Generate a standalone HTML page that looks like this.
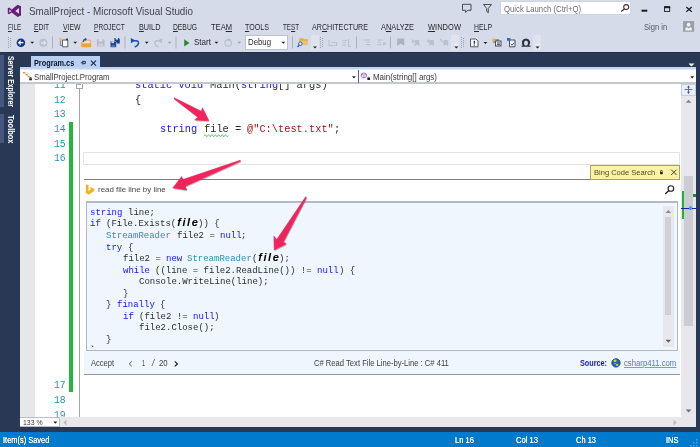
<!DOCTYPE html>
<html><head><meta charset="utf-8"><title>SmallProject - Microsoft Visual Studio</title>
<style>
html,body{margin:0;padding:0;background:#293955;overflow:hidden;}
#root{position:relative;width:700px;height:447px;overflow:hidden;background:#293955;font-family:"Liberation Sans",sans-serif;}
#root div{position:absolute;box-sizing:border-box;}
.t{position:absolute;white-space:pre;line-height:1;transform-origin:0 50%;display:inline-block;}
.t u{text-decoration:underline;text-underline-offset:1px;text-decoration-thickness:0.7px;}
svg#ov{position:absolute;left:0;top:0;}
.t{filter:blur(0.3px);}
svg#ov{filter:blur(0.25px);}

</style></head><body>
<div id="root">
<!-- chrome: title + menu + toolbar -->
<div style="left:0;top:0;width:700px;height:52px;background:#d6dbe9;"></div>
<!-- quick launch -->
<div style="left:500px;top:1px;width:131px;height:14px;background:#ffffff;border:1px solid #d0d5e2;"></div>
<!-- debug combo -->
<div style="left:245px;top:35px;width:43px;height:14.500px;background:#ffffff;border:1px solid #b9c2d6;"></div>
<!-- toolbar overflow buttons -->
<div style="left:311px;top:35px;width:8px;height:15px;background:#dfe3ee;"></div>
<div style="left:451px;top:35px;width:8px;height:15px;background:#dfe3ee;"></div>
<div style="left:533px;top:35px;width:8px;height:15px;background:#dfe3ee;"></div>

<!-- dark frame -->
<div style="left:0;top:52px;width:700px;height:379px;background:#293955;"></div>
<div style="left:0;top:52px;width:700px;height:1px;background:#222f4b;"></div>
<!-- left autohide tabs -->
<div style="left:0;top:55px;width:4px;height:52px;background:#44587d;"></div>
<div style="left:0;top:114px;width:4px;height:29px;background:#44587d;"></div>

<!-- doc tab -->
<div style="left:30.5px;top:55.5px;width:69.5px;height:13px;background:#b8d0f2;"></div>
<div style="left:20px;top:67px;width:676px;height:2px;background:#c0d5f2;"></div><div style="left:20px;top:69px;width:676px;height:1px;background:#dfe9f8;"></div>
<!-- nav bar -->
<div style="left:20px;top:70px;width:676px;height:14px;background:#ffffff;border-bottom:2px solid #c2c7d3;"></div>
<div style="left:357.500px;top:70px;width:1.500px;height:13px;background:#5d6883;"></div>

<!-- editor -->
<div style="left:20px;top:84px;width:676px;height:333px;background:#ffffff;"></div>
<div style="left:20px;top:84px;width:15px;height:333px;background:#e6e7e8;"></div>
<div style="left:79px;top:88px;width:1px;height:329px;background:#a5a5a5;"></div>
<!-- green change bar -->
<div style="left:69px;top:122px;width:4px;height:270px;background:#22b83f;"></div>
<!-- collapse box -->
<div style="left:75.500px;top:84px;width:7.500px;height:5px;background:#ffffff;border:1px solid #a5a5a5;border-top:none;"></div>
<!-- current line box -->
<div style="left:83px;top:152px;width:597px;height:13px;background:#ffffff;border:1px solid #e4e4e4;"></div>
<!-- panel top line -->
<div style="left:84px;top:179px;width:507px;height:1px;background:#7e7e7e;"></div>
<!-- bing code search tab -->
<div style="left:590px;top:165px;width:90px;height:15px;background:#fbf3a3;border:1px solid #a8a26a;"></div>
<!-- code box -->
<div style="left:86px;top:201px;width:592px;height:150px;background:#eff6fe;border:1px solid #b2b8c0;border-top:2px solid #b4bac3;"></div>
<!-- code box scrollbar -->
<div style="left:663px;top:206px;width:11px;height:141px;background:#e8e8ec;"></div>
<div style="left:665px;top:217px;width:6px;height:98px;background:#cfd0d5;"></div>
<!-- accept row -->
<div style="left:84px;top:351px;width:596px;height:24px;background:#f0f6fe;border-bottom:1px solid #979797;"></div>

<!-- vertical scrollbar -->
<div style="left:681px;top:84px;width:15px;height:333px;background:#e8e8ec;"></div>
<div style="left:681px;top:84px;width:15px;height:12px;background:#e9eef8;border:1px solid #c5cde0;"></div>
<div style="left:683.5px;top:176px;width:9.5px;height:150px;background:#cccdd3;"></div>
<div style="left:682px;top:190.5px;width:2px;height:28.5px;background:#1fb53c;"></div>
<div style="left:693px;top:193.5px;width:3.3px;height:3.4px;background:#1e8a2e;"></div>
<div style="left:681px;top:207.5px;width:15.5px;height:1px;background:#1b1fa0;"></div>
<div style="left:688.9px;top:206.3px;width:3.4px;height:3.4px;background:#3a96ff;border-radius:2px;"></div>

<!-- bottom: zoom + hscroll -->
<div style="left:20px;top:417px;width:676px;height:10px;background:#e8e8ec;"></div>
<div style="left:20px;top:417px;width:39.500px;height:10px;background:#ffffff;border:1px solid #b9bdc8;border-left:none;"></div>


<!-- status bar -->
<div style="left:0;top:432px;width:700px;height:15px;background:#007acc;"></div>

<span class=t id=t0 style='left:29.00px;top:7.10px;font-size:10.2px;color:#44444a;font-family:"Liberation Sans", sans-serif;transform:scaleX(0.9666);'>SmallProject - Microsoft Visual Studio</span>
<span class=t id=t1 style='left:8.00px;top:22.80px;font-size:8.5px;color:#2a2a2e;font-family:"Liberation Sans", sans-serif;transform:scaleX(0.7235);'><u>F</u>ILE</span>
<span class=t id=t2 style='left:34.30px;top:22.80px;font-size:8.5px;color:#2a2a2e;font-family:"Liberation Sans", sans-serif;transform:scaleX(0.7794);'><u>E</u>DIT</span>
<span class=t id=t3 style='left:63.00px;top:22.80px;font-size:8.5px;color:#2a2a2e;font-family:"Liberation Sans", sans-serif;transform:scaleX(0.8098);'><u>V</u>IEW</span>
<span class=t id=t4 style='left:94.30px;top:22.80px;font-size:8.5px;color:#2a2a2e;font-family:"Liberation Sans", sans-serif;transform:scaleX(0.7738);'><u>P</u>ROJECT</span>
<span class=t id=t5 style='left:138.60px;top:22.80px;font-size:8.5px;color:#2a2a2e;font-family:"Liberation Sans", sans-serif;transform:scaleX(0.8544);'><u>B</u>UILD</span>
<span class=t id=t6 style='left:173.00px;top:22.80px;font-size:8.5px;color:#2a2a2e;font-family:"Liberation Sans", sans-serif;transform:scaleX(0.7938);'><u>D</u>EBUG</span>
<span class=t id=t7 style='left:211.00px;top:22.80px;font-size:8.5px;color:#2a2a2e;font-family:"Liberation Sans", sans-serif;transform:scaleX(0.8889);'>TEA<u>M</u></span>
<span class=t id=t8 style='left:245.00px;top:22.80px;font-size:8.5px;color:#2a2a2e;font-family:"Liberation Sans", sans-serif;transform:scaleX(0.8371);'><u>T</u>OOLS</span>
<span class=t id=t9 style='left:283.00px;top:22.80px;font-size:8.5px;color:#2a2a2e;font-family:"Liberation Sans", sans-serif;transform:scaleX(0.7356);'>TE<u>S</u>T</span>
<span class=t id=t10 style='left:312.00px;top:22.80px;font-size:8.5px;color:#2a2a2e;font-family:"Liberation Sans", sans-serif;transform:scaleX(0.8409);'>AR<u>C</u>HITECTURE</span>
<span class=t id=t11 style='left:381.00px;top:22.80px;font-size:8.5px;color:#2a2a2e;font-family:"Liberation Sans", sans-serif;transform:scaleX(0.8659);'>A<u>N</u>ALYZE</span>
<span class=t id=t12 style='left:428.00px;top:22.80px;font-size:8.5px;color:#2a2a2e;font-family:"Liberation Sans", sans-serif;transform:scaleX(0.8844);'><u>W</u>INDOW</span>
<span class=t id=t13 style='left:474.00px;top:22.80px;font-size:8.5px;color:#2a2a2e;font-family:"Liberation Sans", sans-serif;transform:scaleX(0.8101);'><u>H</u>ELP</span>
<span class=t id=t14 style='left:644.20px;top:22.90px;font-size:8.6px;color:#555b68;font-family:"Liberation Sans", sans-serif;transform:scaleX(0.8828);'>Sign in</span>
<span class=t id=t15 style='left:503.80px;top:5.00px;font-size:8.4px;color:#6d6d78;font-family:"Liberation Sans", sans-serif;transform:scaleX(0.9240);'>Quick Launch (Ctrl+Q)</span>
<span class=t id=t16 style='left:194.00px;top:38.30px;font-size:8.4px;color:#2a2a2e;font-family:"Liberation Sans", sans-serif;transform:scaleX(0.9611);'>Start</span>
<span class=t id=t17 style='left:248.00px;top:38.30px;font-size:8.4px;color:#2a2a2e;font-family:"Liberation Sans", sans-serif;transform:scaleX(0.9316);'>Debug</span>
<span class=t id=t18 style='left:33.90px;top:58.50px;font-size:8.6px;color:#0a1428;font-family:"Liberation Sans", sans-serif;font-weight:bold;transform:scaleX(0.8500);'>Program.cs</span>
<span class=t id=t19 style='left:34.40px;top:72.50px;font-size:8.7px;color:#3a3a3e;font-family:"Liberation Sans", sans-serif;transform:scaleX(0.8947);'>SmallProject.Program</span>
<span class=t id=t20 style='left:372.50px;top:72.50px;font-size:8.7px;color:#3a3a3e;font-family:"Liberation Sans", sans-serif;transform:scaleX(0.9141);'>Main(string[] args)</span>
<span class=t id=t21 style='left:7.50px;top:4.08px;font-size:9.2px;color:#ffffff;font-family:"Liberation Sans", sans-serif;font-weight:bold;transform:rotate(90deg) scaleX(0.744);transform-origin:0 0;left:15.4px;top:55.6px;'>Server Explorer</span>
<span class=t id=t22 style='left:7.50px;top:92.51px;font-size:9.2px;color:#ffffff;font-family:"Liberation Sans", sans-serif;font-weight:bold;transform:rotate(90deg) scaleX(0.813);transform-origin:0 0;left:15.4px;top:114.5px;'>Toolbox</span>
<span class=t id=t41 style='left:98.30px;top:186.40px;font-size:8.0px;color:#484848;font-family:"Liberation Sans", sans-serif;transform:scaleX(0.9885);'>read file line by line</span>
<span class=t id=t42 style='left:90.20px;top:208.90px;font-size:8.9px;color:#1414f0;font-family:"Liberation Mono", monospace;transform:scaleX(1.0135);'>string</span>
<span class=t id=t43 style='left:128.00px;top:208.90px;font-size:8.9px;color:#2c2c2c;font-family:"Liberation Mono", monospace;transform:scaleX(1.0135);'>line;</span>
<span class=t id=t44 style='left:90.20px;top:220.44px;font-size:8.9px;color:#1414f0;font-family:"Liberation Mono", monospace;transform:scaleX(1.0135);'>if</span>
<span class=t id=t45 style='left:106.40px;top:220.44px;font-size:8.9px;color:#2c2c2c;font-family:"Liberation Mono", monospace;transform:scaleX(1.0137);'>(File.Exists(</span>
<span class=t id=t46 style='left:177.20px;top:217.44px;font-size:11px;color:#000000;font-family:"Liberation Sans", sans-serif;font-weight:bold;font-style:italic;letter-spacing:1.6px;'>file</span>
<span class=t id=t47 style='left:198.20px;top:220.44px;font-size:8.9px;color:#2c2c2c;font-family:"Liberation Mono", monospace;transform:scaleX(1.0135);'>)) {</span>
<span class=t id=t48 style='left:106.40px;top:231.98px;font-size:8.9px;color:#2b91af;font-family:"Liberation Mono", monospace;transform:scaleX(1.0137);'>StreamReader</span>
<span class=t id=t49 style='left:176.60px;top:231.98px;font-size:8.9px;color:#2c2c2c;font-family:"Liberation Mono", monospace;transform:scaleX(1.0139);'>file2 =</span>
<span class=t id=t50 style='left:219.80px;top:231.98px;font-size:8.9px;color:#1414f0;font-family:"Liberation Mono", monospace;transform:scaleX(1.0135);'>null</span>
<span class=t id=t51 style='left:241.40px;top:231.98px;font-size:8.9px;color:#2c2c2c;font-family:"Liberation Mono", monospace;transform:scaleX(1.0135);'>;</span>
<span class=t id=t52 style='left:106.40px;top:243.52px;font-size:8.9px;color:#1414f0;font-family:"Liberation Mono", monospace;transform:scaleX(1.0135);'>try</span>
<span class=t id=t53 style='left:128.00px;top:243.52px;font-size:8.9px;color:#2c2c2c;font-family:"Liberation Mono", monospace;transform:scaleX(1.0135);'>{</span>
<span class=t id=t54 style='left:122.60px;top:255.06px;font-size:8.9px;color:#2c2c2c;font-family:"Liberation Mono", monospace;transform:scaleX(1.0139);'>file2 =</span>
<span class=t id=t55 style='left:165.80px;top:255.06px;font-size:8.9px;color:#1414f0;font-family:"Liberation Mono", monospace;transform:scaleX(1.0135);'>new</span>
<span class=t id=t56 style='left:187.40px;top:255.06px;font-size:8.9px;color:#2b91af;font-family:"Liberation Mono", monospace;transform:scaleX(1.0137);'>StreamReader</span>
<span class=t id=t57 style='left:252.20px;top:255.06px;font-size:8.9px;color:#2c2c2c;font-family:"Liberation Mono", monospace;transform:scaleX(1.0135);'>(</span>
<span class=t id=t58 style='left:258.20px;top:252.06px;font-size:11px;color:#000000;font-family:"Liberation Sans", sans-serif;font-weight:bold;font-style:italic;letter-spacing:1.6px;'>file</span>
<span class=t id=t59 style='left:279.20px;top:255.06px;font-size:8.9px;color:#2c2c2c;font-family:"Liberation Mono", monospace;transform:scaleX(1.0135);'>);</span>
<span class=t id=t60 style='left:122.60px;top:266.60px;font-size:8.9px;color:#1414f0;font-family:"Liberation Mono", monospace;transform:scaleX(1.0135);'>while</span>
<span class=t id=t61 style='left:155.00px;top:266.60px;font-size:8.9px;color:#2c2c2c;font-family:"Liberation Mono", monospace;transform:scaleX(1.0139);'>((line = file2.ReadLine()) !=</span>
<span class=t id=t62 style='left:317.00px;top:266.60px;font-size:8.9px;color:#1414f0;font-family:"Liberation Mono", monospace;transform:scaleX(1.0135);'>null</span>
<span class=t id=t63 style='left:338.60px;top:266.60px;font-size:8.9px;color:#2c2c2c;font-family:"Liberation Mono", monospace;transform:scaleX(1.0135);'>) {</span>
<span class=t id=t64 style='left:138.80px;top:278.14px;font-size:8.9px;color:#2c2c2c;font-family:"Liberation Mono", monospace;transform:scaleX(1.0139);'>Console.WriteLine(line);</span>
<span class=t id=t65 style='left:122.60px;top:289.68px;font-size:8.9px;color:#2c2c2c;font-family:"Liberation Mono", monospace;transform:scaleX(1.0135);'>}</span>
<span class=t id=t66 style='left:106.40px;top:301.22px;font-size:8.9px;color:#2c2c2c;font-family:"Liberation Mono", monospace;transform:scaleX(1.0135);'>}</span>
<span class=t id=t67 style='left:117.20px;top:301.22px;font-size:8.9px;color:#1414f0;font-family:"Liberation Mono", monospace;transform:scaleX(1.0139);'>finally</span>
<span class=t id=t68 style='left:160.40px;top:301.22px;font-size:8.9px;color:#2c2c2c;font-family:"Liberation Mono", monospace;transform:scaleX(1.0135);'>{</span>
<span class=t id=t69 style='left:122.60px;top:312.76px;font-size:8.9px;color:#1414f0;font-family:"Liberation Mono", monospace;transform:scaleX(1.0135);'>if</span>
<span class=t id=t70 style='left:138.80px;top:312.76px;font-size:8.9px;color:#2c2c2c;font-family:"Liberation Mono", monospace;transform:scaleX(1.0138);'>(file2 !=</span>
<span class=t id=t71 style='left:192.80px;top:312.76px;font-size:8.9px;color:#1414f0;font-family:"Liberation Mono", monospace;transform:scaleX(1.0135);'>null</span>
<span class=t id=t72 style='left:214.40px;top:312.76px;font-size:8.9px;color:#2c2c2c;font-family:"Liberation Mono", monospace;transform:scaleX(1.0135);'>)</span>
<span class=t id=t73 style='left:138.80px;top:324.30px;font-size:8.9px;color:#2c2c2c;font-family:"Liberation Mono", monospace;transform:scaleX(1.0139);'>file2.Close();</span>
<span class=t id=t74 style='left:106.40px;top:335.84px;font-size:8.9px;color:#2c2c2c;font-family:"Liberation Mono", monospace;transform:scaleX(1.0135);'>}</span>
<span class=t id=t75 style='left:90.60px;top:358.90px;font-size:8.4px;color:#3c3c3c;font-family:"Liberation Sans", sans-serif;transform:scaleX(0.9020);'>Accept</span>
<span class=t id=t76 style='left:142.30px;top:358.90px;font-size:8.4px;color:#3c3c3c;font-family:"Liberation Sans", sans-serif;transform:scaleX(0.6421);'>1</span>
<span class=t id=t77 style='left:152.00px;top:358.90px;font-size:8.4px;color:#3c3c3c;font-family:"Liberation Sans", sans-serif;font-style:italic;transform:scaleX(0.9879);'>/</span>
<span class=t id=t78 style='left:159.30px;top:358.90px;font-size:8.4px;color:#3c3c3c;font-family:"Liberation Sans", sans-serif;transform:scaleX(0.9327);'>20</span>
<span class=t id=t79 style='left:313.70px;top:358.90px;font-size:8.3px;color:#3c3c3c;font-family:"Liberation Sans", sans-serif;transform:scaleX(0.9182);'>C# Read Text File Line-by-Line : C# 411</span>
<span class=t id=t80 style='left:580.00px;top:358.90px;font-size:8.3px;color:#1818b0;font-family:"Liberation Sans", sans-serif;font-weight:bold;transform:scaleX(0.8741);'>Source:</span>
<span class=t id=t81 style='left:623.70px;top:359.10px;font-size:8.3px;color:#4f7cc8;font-family:"Liberation Sans", sans-serif;transform:scaleX(0.9321);text-decoration:underline;text-decoration-thickness:0.5px;text-underline-offset:0.8px;text-decoration-color:#7a9ad6;'>csharp411.com</span>
<span class=t id=t82 style='left:594.00px;top:169.40px;font-size:8.0px;color:#4e4a24;font-family:"Liberation Sans", sans-serif;transform:scaleX(0.9409);'>Bing Code Search</span>
<span class=t id=t83 style='left:22.90px;top:419.10px;font-size:7.0px;color:#3a3a3a;font-family:"Liberation Sans", sans-serif;transform:scaleX(0.9869);'>133 %</span>
<span class=t id=t84 style='left:2.70px;top:435.90px;font-size:8.4px;color:#ffffff;font-family:"Liberation Sans", sans-serif;transform:scaleX(0.8899);text-shadow:0 0 0.5px #fff;'>Item(s) Saved</span>
<span class=t id=t85 style='left:455.00px;top:435.90px;font-size:8.4px;color:#ffffff;font-family:"Liberation Sans", sans-serif;transform:scaleX(0.9061);text-shadow:0 0 0.5px #fff;'>Ln 16</span>
<span class=t id=t86 style='left:516.00px;top:435.90px;font-size:8.4px;color:#ffffff;font-family:"Liberation Sans", sans-serif;transform:scaleX(0.9084);text-shadow:0 0 0.5px #fff;'>Col 13</span>
<span class=t id=t87 style='left:576.00px;top:435.90px;font-size:8.4px;color:#ffffff;font-family:"Liberation Sans", sans-serif;transform:scaleX(0.8945);text-shadow:0 0 0.5px #fff;'>Ch 13</span>
<span class=t id=t88 style='left:665.50px;top:435.90px;font-size:8.4px;color:#ffffff;font-family:"Liberation Sans", sans-serif;transform:scaleX(0.8949);text-shadow:0 0 0.5px #fff;'>INS</span>
<div style='left:0;top:84px;width:700px;height:333px;overflow:hidden;'>
<span class=t id=t23 style='left:54.30px;top:-4.00px;font-size:10.6px;color:#2b91af;font-family:"Liberation Mono", monospace;transform:scaleX(0.9199);'>11</span>
<span class=t id=t24 style='left:54.30px;top:10.60px;font-size:10.6px;color:#2b91af;font-family:"Liberation Mono", monospace;transform:scaleX(0.9199);'>12</span>
<span class=t id=t25 style='left:54.30px;top:25.40px;font-size:10.6px;color:#2b91af;font-family:"Liberation Mono", monospace;transform:scaleX(0.9199);'>13</span>
<span class=t id=t26 style='left:54.30px;top:40.00px;font-size:10.6px;color:#2b91af;font-family:"Liberation Mono", monospace;transform:scaleX(0.9199);'>14</span>
<span class=t id=t27 style='left:54.30px;top:54.70px;font-size:10.6px;color:#2b91af;font-family:"Liberation Mono", monospace;transform:scaleX(0.9199);'>15</span>
<span class=t id=t28 style='left:54.30px;top:69.40px;font-size:10.6px;color:#2b91af;font-family:"Liberation Mono", monospace;transform:scaleX(0.9199);'>16</span>
<span class=t id=t29 style='left:54.30px;top:296.40px;font-size:10.6px;color:#2b91af;font-family:"Liberation Mono", monospace;transform:scaleX(0.9199);'>17</span>
<span class=t id=t30 style='left:54.30px;top:311.30px;font-size:10.6px;color:#2b91af;font-family:"Liberation Mono", monospace;transform:scaleX(0.9199);'>18</span>
<span class=t id=t31 style='left:54.30px;top:326.20px;font-size:10.6px;color:#2b91af;font-family:"Liberation Mono", monospace;transform:scaleX(0.9199);'>19</span>
<span class=t id=t32 style='left:135.30px;top:-4.00px;font-size:10.6px;color:#1414f0;font-family:"Liberation Mono", monospace;transform:scaleX(0.9752);'>static void</span>
<span class=t id=t33 style='left:209.70px;top:-4.00px;font-size:10.6px;color:#2c2c2c;font-family:"Liberation Mono", monospace;transform:scaleX(0.9749);'>Main(</span>
<span class=t id=t34 style='left:240.70px;top:-4.00px;font-size:10.6px;color:#1414f0;font-family:"Liberation Mono", monospace;transform:scaleX(0.9749);'>string</span>
<span class=t id=t35 style='left:277.90px;top:-4.00px;font-size:10.6px;color:#2c2c2c;font-family:"Liberation Mono", monospace;transform:scaleX(0.9752);'>[] args)</span>
<span class=t id=t36 style='left:135.30px;top:10.60px;font-size:10.6px;color:#2c2c2c;font-family:"Liberation Mono", monospace;transform:scaleX(0.9749);'>{</span>
<span class=t id=t37 style='left:160.10px;top:39.80px;font-size:10.6px;color:#1414f0;font-family:"Liberation Mono", monospace;transform:scaleX(0.9749);'>string</span>
<span class=t id=t38 style='left:203.50px;top:39.80px;font-size:10.6px;color:#2c2c2c;font-family:"Liberation Mono", monospace;transform:scaleX(0.9749);'>file =</span>
<span class=t id=t39 style='left:246.90px;top:39.80px;font-size:10.6px;color:#a31515;font-family:"Liberation Mono", monospace;transform:scaleX(0.9751);'>@&quot;C:\test.txt&quot;</span>
<span class=t id=t40 style='left:333.70px;top:39.80px;font-size:10.6px;color:#2c2c2c;font-family:"Liberation Mono", monospace;transform:scaleX(0.9749);'>;</span>
</div>
<svg id="ov" width="700" height="447" viewBox="0 0 700 447">
<defs>
<filter id="sh" x="-20%" y="-20%" width="140%" height="140%"><feGaussianBlur stdDeviation="0.5"/></filter>
</defs>
<!-- VS logo -->
<path fill="#68217a" fill-rule="evenodd" d="M17.600 4.700 L21 6.200 V15.600 L17.600 17.100 L11.600 12.400 L9.200 14.300 L7.800 13.600 V8.200 L9.200 7.500 L11.600 9.400 Z M19 8.100 L15.300 10.900 L19 13.700 Z M9.300 9.400 V12.600 L11.400 11 Z"/>
<!-- feedback bubble -->
<path fill="none" stroke="#3c3c40" stroke-width="0.900" d="M462.500 4.300 H471 V10.300 H467.800 L465.600 12.400 V10.300 H462.500 Z"/>
<!-- funnel / flag -->
<path fill="none" stroke="#3c3c40" stroke-width="0.900" d="M483.500 4.500 H491.500 L488.300 8.500 V12.800 L486.700 11.500 V8.500 Z"/>
<!-- quick launch magnifier -->
<circle cx="626.200" cy="7.100" r="2.500" fill="none" stroke="#3a3a3a" stroke-width="1.100"/>
<path stroke="#3a3a3a" stroke-width="1.300" d="M624.400 8.900 L621.200 11.500"/>
<!-- window buttons -->
<rect x="641.500" y="9.700" width="5.800" height="2" fill="#1e1e1e"/>
<rect x="664.500" y="6.800" width="5.200" height="4.600" fill="none" stroke="#1e1e1e" stroke-width="0.900"/>
<rect x="664" y="6.300" width="6.200" height="1.900" fill="#1e1e1e"/>
<path stroke="#1e1e1e" stroke-width="1.200" d="M686.300 7 L691.700 11.800 M691.700 7 L686.300 11.800"/>
<!-- sign-in avatar -->
<rect x="683.100" y="21.100" width="11" height="10.700" fill="#9a9ea9"/>
<circle cx="688.600" cy="24.700" r="1.900" fill="#f2f3f7"/>
<path fill="#f2f3f7" d="M685.400 30.600 V28.300 Q685.600 27.200 687 27.200 L688.600 28.600 L690.200 27.200 Q691.600 27.200 691.800 28.300 V30.600 Z"/>

<!-- TOOLBAR -->
<g id="tb">
<!-- gripper -->
<g fill="#9aa3b8"><rect x="8" y="37" width="1" height="1"/><rect x="10" y="38" width="1" height="1"/><rect x="8" y="39" width="1" height="1"/><rect x="10" y="40" width="1" height="1"/><rect x="8" y="41" width="1" height="1"/><rect x="10" y="42" width="1" height="1"/><rect x="8" y="43" width="1" height="1"/><rect x="10" y="44" width="1" height="1"/><rect x="8" y="45" width="1" height="1"/><rect x="10" y="46" width="1" height="1"/><rect x="8" y="47" width="1" height="1"/></g>
<!-- back -->
<circle cx="20.900" cy="42.700" r="4.300" fill="#15397f"/>
<path fill="none" stroke="#ffffff" stroke-width="1.200" d="M23.400 42.700 H18.800 M20.700 40.700 L18.700 42.700 L20.700 44.700"/>
<path fill="#1e1e1e" d="M30.300 41.700 h3.800 l-1.900 2.100 z"/>
<!-- forward grey -->
<circle cx="43.300" cy="42.800" r="4.100" fill="#bcc0cc"/>
<path fill="none" stroke="#e4e7ef" stroke-width="1.200" d="M41 42.800 H45.400 M43.600 40.900 L45.500 42.800 L43.600 44.700"/>
<rect x="52" y="36.500" width="1" height="12" fill="#a9b1c4"/>
<!-- new item -->
<path fill="none" stroke="#6a7080" stroke-width="0.800" d="M60.400 41 V45.500 H62"/>
<path fill="#fbfbfd" stroke="#4a4f5c" stroke-width="0.900" d="M62.500 40 H67.800 V46.800 H62.500 Z"/>
<path fill="#ebb868" d="M59.200 38.200 h2.800 v2.600 h-2.800z"/>
<path fill="#2a2e3a" d="M66.200 38.500 h1.700 v1.700 h-1.700z"/>
<path fill="#1e1e1e" d="M73.300 41.700 h3.800 l-1.900 2.100 z"/>
<!-- open folder -->
<path fill="#f6e0b0" stroke="#e2a441" stroke-width="0.800" d="M86.500 40.200 H90.600 V46.600 H81.800 V42 Z"/>
<path fill="#e8a33d" d="M81.400 43.400 H90.900 V47.100 H81.400 Z"/>
<path fill="none" stroke="#1c57b0" stroke-width="1.200" d="M83.300 42 Q83.300 39.400 85.600 39.200"/>
<path fill="#1c57b0" d="M85 37.700 L87 39.300 L85 40.900 Z"/>
<!-- save grey -->
<path fill="#b7bcc9" d="M97 39.200 H103.300 L104.600 40.500 V46.600 H97 Z"/>
<rect x="98.700" y="39.200" width="3.600" height="2.300" fill="#dcdfe8"/>
<rect x="98.600" y="43.400" width="4.400" height="3.200" fill="#cdd1dc"/>
<!-- save all navy -->
<path fill="#1c3f8c" d="M114.400 38 H118.600 L119.800 39.200 V43.400 H114.400 Z"/>
<rect x="115.700" y="38" width="2.200" height="1.700" fill="#d8e0f0"/>
<path fill="#1c3f8c" stroke="#d4d9e8" stroke-width="0.600" d="M110.200 41.300 H115.200 L116.400 42.500 V47.200 H110.200 Z"/>
<rect x="111.500" y="41.500" width="2.400" height="1.700" fill="#d8e0f0"/>
<rect x="111.500" y="44.800" width="3.400" height="2.400" fill="#5670b0"/>
<rect x="124.500" y="36.500" width="1" height="12" fill="#a9b1c4"/>
<!-- undo -->
<path fill="none" stroke="#1c4fa8" stroke-width="1.500" d="M133 40.700 H136 Q138.800 41 138.500 43.500 Q138 45.800 134.800 47"/>
<path fill="#1c4fa8" d="M130.800 38 L131 43.200 L135.300 40.400 Z"/>
<path fill="#1e1e1e" d="M144.800 41.700 h3.800 l-1.900 2.100 z"/>
<!-- redo grey -->
<path fill="none" stroke="#bcc0cc" stroke-width="1.400" d="M160 40.700 H157.300 Q154.600 41 154.900 43.500 Q155.400 45.800 158.400 47"/>
<path fill="#bcc0cc" d="M162.200 38 L162 43.200 L157.800 40.400 Z"/>
<path fill="#9ba1b0" d="M167.700 41.700 h3.800 l-1.900 2.100 z"/>
<rect x="175.500" y="36.500" width="1" height="12" fill="#a9b1c4"/>
<!-- start -->
<path fill="#2e8a2e" d="M184.200 39.200 L189.500 42.900 L184.200 46.600 Z"/>
<path fill="#1e1e1e" d="M214.500 41.700 h3.800 l-1.900 2.100 z"/>
<!-- refresh grey -->
<circle cx="228.100" cy="43.100" r="3.200" fill="none" stroke="#b9bdc9" stroke-width="1.100"/>
<path fill="#b9bdc9" d="M227.500 38.300 L231 39.600 L228.300 41.600 Z"/>
<path fill="#9ba1b0" d="M237.400 41.700 h3.800 l-1.900 2.100 z"/>
<path fill="#1e1e1e" d="M281.400 41.700 h3.800 l-1.900 2.100 z"/>
<rect x="292" y="36.500" width="1" height="12" fill="#a9b1c4"/>
<!-- find in files -->
<path fill="#e8a93f" d="M299.500 38.300 H303 L304 39.300 H307.900 V44.400 H299.500 Z"/>
<path fill="#f0c170" d="M300.500 40.800 H307.900 V44.400 H299.500 Z"/>
<circle cx="300.300" cy="43.800" r="1.800" fill="#e4ecfa" stroke="#1c57b0" stroke-width="0.900"/>
<path stroke="#1c57b0" stroke-width="1.200" d="M299.100 45.200 L297.600 47"/>
<!-- overflow -->
<rect x="313" y="44" width="4" height="1" fill="#f4f5f9"/><path fill="#1e1e1e" d="M313 46.500 h4 l-2 2 z"/>
<!-- gripper 2 -->
<g fill="#9aa3b8"><rect x="320" y="37" width="1" height="1"/><rect x="322" y="38" width="1" height="1"/><rect x="320" y="39" width="1" height="1"/><rect x="322" y="40" width="1" height="1"/><rect x="320" y="41" width="1" height="1"/><rect x="322" y="42" width="1" height="1"/><rect x="320" y="43" width="1" height="1"/><rect x="322" y="44" width="1" height="1"/><rect x="320" y="45" width="1" height="1"/><rect x="322" y="46" width="1" height="1"/><rect x="320" y="47" width="1" height="1"/></g>
<!-- greyed icons -->
<g fill="none" stroke="#bdc2d0" stroke-width="1.100">
<path d="M329 40 V45.500 H336.500 V42.500 H331"/>
<path d="M342.500 40.500 H347 M342.500 42.700 H346 M342.500 45 H346 M348.500 39 V46.500 H351"/>
<path d="M363.500 40 H370 M366 42.300 H370 M366 44.600 H370"/>
<path d="M377.500 40 H383 M377.500 42.300 H381 M377.500 44.600 H381 M383 42.500 L385.300 44.800 M385.300 42.500 L383 44.800"/>
</g>
<rect x="356" y="36.500" width="1" height="12" fill="#a9b1c4"/>
<rect x="390" y="36.500" width="1" height="12" fill="#a9b1c4"/>
<path fill="#acb1c0" d="M397.200 38.400 H404.200 V45.800 L400.700 43.600 L397.200 45.800 Z"/>
<g fill="#bbc0ce">
<path d="M414.800 40 H419.300 V46.200 L417 44.600 L414.800 46.200 Z"/><path d="M412 39 l3 2.200 l-3 2.200 z"/>
<path d="M429.400 40 H433.900 V46.200 L431.600 44.600 L429.400 46.200 Z"/><path d="M429.400 39 l-3 2.200 l3 2.200 z"/>
<path d="M443.600 40 H448.100 V46.200 L445.800 44.600 L443.600 46.200 Z"/><path d="M440.400 38.600 l3.600 3.600 l-0.900 0.900 l-3.600 -3.600 z"/>
</g>
<rect x="454.300" y="44" width="4" height="1" fill="#f4f5f9"/><path fill="#1e1e1e" d="M454.300 46.500 h4 l-2 2 z"/>
<g fill="#9aa3b8"><rect x="461" y="37" width="1" height="1"/><rect x="463" y="38" width="1" height="1"/><rect x="461" y="39" width="1" height="1"/><rect x="463" y="40" width="1" height="1"/><rect x="461" y="41" width="1" height="1"/><rect x="463" y="42" width="1" height="1"/><rect x="461" y="43" width="1" height="1"/><rect x="463" y="44" width="1" height="1"/><rect x="461" y="45" width="1" height="1"/><rect x="463" y="46" width="1" height="1"/><rect x="461" y="47" width="1" height="1"/></g>
<!-- doc with ! -->
<path fill="#f8f8fa" stroke="#4a4f5c" stroke-width="0.900" d="M470.500 39 H476 L478 41 V46.800 H470.500 Z"/>
<rect x="473.800" y="40.800" width="1.100" height="3" fill="#1e1e1e"/><rect x="473.800" y="44.600" width="1.100" height="1.100" fill="#1e1e1e"/>
<path fill="#1e1e1e" d="M483.500 41.900 h3.800 l-1.900 2.100 z"/>
<!-- 3 misc icons -->
<g fill="none" stroke="#3a3f4d" stroke-width="0.900">
<rect x="495.500" y="41" width="5.500" height="5" fill="#eef0f5"/><path d="M497 43 H500 M497 44.600 H500 M494 43 V40 H499"/>
<path d="M509.500 40 H515 V46.800 H509.500 Z" fill="#f2f4f8"/><path d="M511 44 L512.200 45.200 L514 42.600"/>
</g>
<path fill="#2d3140" d="M521.500 46.700 H530.500 V45.500 H529 Q530.800 43.500 530 41.200 Q528.800 38.400 526 38.400 Q523 38.500 522 41.200 Q521.400 43.600 523 45.500 H521.500 Z M524 43 Q524 40.600 526 40.500 Q528 40.600 528 43 Q528 44.600 526.800 45.500 H525.200 Q524 44.600 524 43 Z" fill-rule="evenodd"/>
<path fill="#ebb868" d="M492 38.400 h3.200 v3 h-3.200z"/>
<path fill="#2a6cc8" d="M507 38 h3.400 v2.800 h-3.400z"/>
<rect x="535.500" y="44" width="4" height="1" fill="#f4f5f9"/><path fill="#1e1e1e" d="M535.500 46.500 h4 l-2 2 z"/>
</g>

<!-- tab pin + close -->
<path fill="none" stroke="#1b2740" stroke-width="0.900" d="M80.800 62.700 H82.600 M82.800 60.800 V64.600 M82.800 61.500 H85.300 M82.800 63.600 H85.300 V61.200"/>
<path stroke="#1b2740" stroke-width="1.100" d="M90.900 60.600 L96 65.700 M96 60.600 L90.900 65.700"/>
<!-- tab-row dropdown -->
<path fill="#ffffff" d="M688.500 63.500 h6 l-3 3 z"/>
<!-- nav icons -->
<g>
<path fill="#e09a3a" d="M22.900 72 h2.400 v1.600 h-2.400z M25.600 74 h2.200 v1.600 h-2.200z M27.700 76 h2 v1.600 h-2z"/>
<path fill="none" stroke="#e8b468" stroke-width="0.700" d="M25 73.400 L26 74.300 M27.400 75.400 L28.300 76.300 M26.800 72.600 L28.600 73.400"/>
<rect x="29.200" y="78.300" width="2.700" height="2" fill="#1e1e1e"/><path fill="none" stroke="#1e1e1e" stroke-width="0.600" d="M29.800 78.300 v-0.800 h1.500 v0.800"/>
<path fill="#faf6fc" stroke="#9a4fb8" stroke-width="0.800" d="M363.900 72.800 l2.500 1.200 v2.800 l-2.500 1.200 l-2.500 -1.200 v-2.800 z"/>
<path fill="none" stroke="#9a4fb8" stroke-width="0.600" d="M361.400 74 l2.500 1.200 l2.500 -1.200 M363.900 75.200 v2.800"/>
<rect x="367.300" y="78" width="2.700" height="2" fill="#1e1e1e"/><path fill="none" stroke="#1e1e1e" stroke-width="0.600" d="M367.900 78 v-0.800 h1.500 v0.800"/>
<path fill="#1e1e1e" d="M352 76.300 h3.800 l-1.900 2.100 z"/>
<path fill="#1e1e1e" d="M690.300 76.300 h3.800 l-1.900 2.100 z"/>
</g>
<!-- collapse minus -->
<rect x="77.500" y="84" width="3.500" height="0.800" fill="#8b8b8b"/>
<!-- squiggle under file -->
<path fill="none" stroke="#35a545" stroke-width="0.800" d="M204.300 135.700 q0.850 -2.0 1.700 0 q0.850 2.0 1.700 0 q0.850 -2.0 1.700 0 q0.850 2.0 1.700 0 q0.850 -2.0 1.700 0 q0.850 2.0 1.700 0 q0.850 -2.0 1.700 0 q0.850 2.0 1.700 0 q0.850 -2.0 1.700 0 q0.850 2.0 1.700 0 q0.850 -2.0 1.700 0 q0.850 2.0 1.700 0 q0.850 -2.0 1.700 0 q0.850 2.0 1.700 0"/>

<!-- scrollbar glyphs -->
<path fill="#80848f" d="M685.700 102.800 h5.800 l-2.900 -3 z"/>
<path fill="#6a6f7c" d="M685.700 409.600 h5.800 l-2.900 3 z"/>
<path fill="none" stroke="#6a7288" stroke-width="1" d="M684.500 89.500 H692.500 M688.500 86 V93.500"/>
<path fill="#4a5268" d="M687 87.400 h3 l-1.500 -1.900 z M687 91.800 h3 l-1.500 1.900 z"/>
<path fill="#b9bcc6" d="M66.500 419.500 v6 l-3.200 -3 z"/>
<path fill="#b9bcc6" d="M673.500 419.500 v6 l3.200 -3 z"/>
<path fill="#1e1e1e" d="M53.300 421.500 h4 l-2 2.200 z"/>
<!-- code box scrollbar arrows -->
<path fill="#868b98" d="M665.500 213 h5.600 l-2.800 -3 z"/>
<path fill="#5a5f6c" d="M665.500 339.700 h5.600 l-2.800 3 z"/>

<!-- bing tab pin + close -->
<rect x="660" y="172" width="2.800" height="2.200" fill="#2d2d2d"/><path fill="none" stroke="#2d2d2d" stroke-width="0.700" d="M660.600 172 v-1.400 h1.600 v1.400"/>
<path stroke="#2d2d2d" stroke-width="0.900" d="M671.200 169.600 L676.600 175 M676.600 169.600 L671.200 175"/>
<!-- panel search icon -->
<circle cx="670.900" cy="188.500" r="2.800" fill="none" stroke="#1e1e1e" stroke-width="1.100"/>
<path stroke="#1e1e1e" stroke-width="1.400" d="M668.900 190.600 L665.200 193.900"/>
<!-- bing logo -->
<path fill="#f4b41e" d="M85.900 184.200 L88.500 185.100 V190.700 L90.700 189.600 L89.700 187.100 L94.300 188.700 V191.100 L88.500 194.700 L85.900 193.100 Z"/>
<path fill="none" stroke="#555" stroke-width="1" d="M131.800 361.400 L129.200 363.900 L131.800 366.400"/><path fill="none" stroke="#222" stroke-width="1.300" d="M174.800 361.400 L177.400 363.900 L174.800 366.400"/>
<path stroke="#3a3a3a" stroke-width="1" d="M92 345.500 L93.200 347"/>
<!-- globe -->
<circle cx="616" cy="362.900" r="4.200" fill="#2463ac" stroke="#1b3d72" stroke-width="0.800"/>
<ellipse cx="615.100" cy="360.800" rx="1.500" ry="1.200" fill="#b6e040"/>
<ellipse cx="617.100" cy="364.900" rx="1.300" ry="1.100" fill="#a6dc38"/>
<path fill="#7cc04a" d="M613.600 362.600 q1 0.800 2.200 0.200 q0.400 1 -0.600 1.800 q-1.200 -0.400 -1.600 -2z"/>
<!-- status grip -->
<g fill="#4f9fdc"><rect x="696" y="439" width="1.500" height="1.500"/><rect x="693" y="442" width="1.500" height="1.500"/><rect x="696" y="442" width="1.500" height="1.500"/><rect x="690" y="445" width="1.500" height="1.500"/><rect x="693" y="445" width="1.500" height="1.500"/><rect x="696" y="445" width="1.500" height="1.500"/></g>

<!-- annotation arrows -->
<g id="arrows">
<g fill="#555" opacity="0.35" filter="url(#sh)" transform="translate(0.6,1.3)">
<path d="M174.400 97.900 L201.400 111.300 L202.400 107.800 L208.900 120.700 L194.600 120 L198 117.200 L174 98.700 Z"/>
<path d="M240.100 160.300 L182.900 179.600 L181.700 176.500 L172.800 187.900 L186.900 189.900 L185.100 186.400 L240.600 161.200 Z"/>
<path d="M305.700 196.800 L276.800 239.500 L273.900 236.300 L274.200 250 L286.300 243.900 L283.400 242.100 L306.600 197.400 Z"/>
</g>
<g fill="#f0235c" stroke="#f0235c" stroke-width="0.6" stroke-linejoin="round">
<path d="M174.400 97.900 L201.400 111.300 L202.400 107.800 L208.900 120.700 L194.600 120 L198 117.200 L174 98.700 Z"/>
<path d="M240.100 160.300 L182.900 179.600 L181.700 176.500 L172.800 187.900 L186.900 189.900 L185.100 186.400 L240.600 161.200 Z"/>
<path d="M305.700 196.800 L276.800 239.500 L273.900 236.300 L274.200 250 L286.300 243.900 L283.400 242.100 L306.600 197.400 Z"/>
</g>
</g>
</svg>

</div>
</body></html>
